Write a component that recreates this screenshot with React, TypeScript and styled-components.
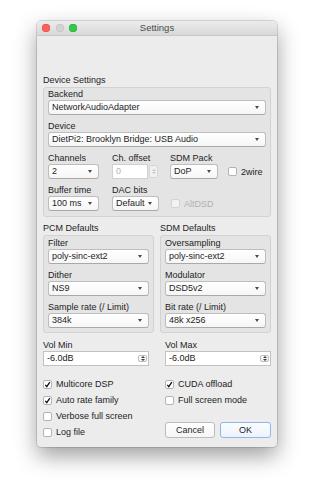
import React from 'react';
import styled, { createGlobalStyle } from 'styled-components';

const GlobalStyle = createGlobalStyle`
    html, body {
        margin: 0;
        padding: 0;
        background: #ffffff;
    }
    body {
        font-family: "Liberation Sans", Arial, sans-serif;
        font-size: 9px;
        color: #232323;
    }
`;

const Page = styled.div`
    width: 314px;
    height: 500px;
    padding: 21px 0 0 37px;
    box-sizing: border-box;
`;

const Window = styled.div`
    width: 240px;
    height: 426px;
    background: #ececec;
    border-radius: 4px;
    overflow: hidden;
    box-shadow: 0 9px 22px rgba(0, 0, 0, 0.38), 0 0 0 0.5px rgba(0, 0, 0, 0.25);
    display: flex;
    flex-direction: column;
`;

const TitleBar = styled.div`
    height: 14px;
    border-bottom: 1px solid #c9c9c9;
    background: linear-gradient(#ececec, #d8d8d8);
    display: flex;
    align-items: center;
    position: relative;
    padding-left: 5px;
`;

const Lights = styled.div`
    display: flex;
    gap: 5.5px;
`;

const Light = styled.span<{ $color: string; $edge: string }>`
    width: 8px;
    height: 8px;
    border-radius: 50%;
    background: ${p => p.$color};
    box-shadow: inset 0 0 0 0.5px ${p => p.$edge};
`;

const Title = styled.div`
    position: absolute;
    left: 0;
    right: 0;
    text-align: center;
    font-size: 9.5px;
    color: #4a4a4a;
    line-height: 14px;
`;

const Body = styled.div`
    padding: 39px 6px 7px 6px;
    display: flex;
    flex-direction: column;
`;

const SectionLabel = styled.div`
    line-height: 10px;
    height: 10px;
    margin-bottom: 2px;
    white-space: nowrap;
`;

const GroupBox = styled.div<{ $pt: number; $pb: number }>`
    border: 1px solid #d2d2d2;
    border-radius: 3px;
    background: #e4e4e4;
    padding: ${p => p.$pt}px 4px ${p => p.$pb}px 4px;
    display: flex;
    flex-direction: column;
    gap: 6px;
`;

const Field = styled.div<{ $w?: number; $ml?: number }>`
    display: flex;
    flex-direction: column;
    gap: 1px;
    width: ${p => (p.$w ? `${p.$w}px` : 'auto')};
    margin-left: ${p => p.$ml ?? 0}px;
    flex-shrink: 0;
`;

const FieldLabel = styled.div`
    line-height: 10px;
    height: 10px;
    white-space: nowrap;
`;

const Combo = styled.div`
    height: 15px;
    box-sizing: border-box;
    border: 1px solid #bdbdbd;
    border-bottom-color: #a9a9a9;
    border-radius: 3px;
    background: linear-gradient(#ffffff, #f6f6f6);
    display: flex;
    align-items: center;
    padding: 0 5px 0 3px;
    white-space: nowrap;
    overflow: hidden;
`;

const ComboText = styled.span`
    flex: 1;
    line-height: 13px;
`;

const Arrow = styled.span`
    width: 0;
    height: 0;
    border-left: 2.5px solid transparent;
    border-right: 2.5px solid transparent;
    border-top: 3px solid #4a4a4a;
    margin-right: 1px;
`;

const Spin = styled.div`
    height: 15px;
    display: flex;
    align-items: stretch;
    gap: 1px;
`;

const SpinInput = styled.div<{ $disabled?: boolean }>`
    flex: 1;
    box-sizing: border-box;
    background: #ffffff;
    border: 1px solid ${p => (p.$disabled ? '#d0d0d0' : '#c2c2c2')};
    color: ${p => (p.$disabled ? '#b4b4b4' : '#222')};
    padding-left: 3px;
    line-height: 13px;
    display: flex;
    align-items: center;
    justify-content: space-between;
`;

const Stepper = styled.div<{ $disabled?: boolean }>`
    width: 7px;
    display: flex;
    flex-direction: column;
    justify-content: center;
    align-items: center;
    gap: 1.5px;
    border-radius: 2px;
    background: ${p => (p.$disabled ? '#f1f1f1' : 'linear-gradient(#fff, #f0f0f0)')};
    border: 0.5px solid ${p => (p.$disabled ? '#d6d6d6' : '#bdbdbd')};
    margin: 1px 1px 1px 0;
`;

const StepUp = styled.span<{ $c: string }>`
    border-left: 2px solid transparent;
    border-right: 2px solid transparent;
    border-bottom: 2.5px solid ${p => p.$c};
`;

const StepDown = styled.span<{ $c: string }>`
    border-left: 2px solid transparent;
    border-right: 2px solid transparent;
    border-top: 2.5px solid ${p => p.$c};
`;

const Row = styled.div`
    display: flex;
    align-items: flex-end;
`;

const Columns = styled.div<{ $cols: string; $gap: number; $mt: number }>`
    display: grid;
    grid-template-columns: ${p => p.$cols};
    column-gap: ${p => p.$gap}px;
    margin-top: ${p => p.$mt}px;
    align-items: start;
`;

const Col = styled.div`
    display: flex;
    flex-direction: column;
`;

const CheckRow = styled.div<{ $ml?: number; $disabled?: boolean; $h?: number }>`
    height: ${p => p.$h ?? 16}px;
    display: flex;
    align-items: center;
    gap: 4px;
    margin-left: ${p => p.$ml ?? 0}px;
    color: ${p => (p.$disabled ? '#b0b0b0' : '#232323')};
    white-space: nowrap;
`;

const Box = styled.span<{ $disabled?: boolean }>`
    width: 9px;
    height: 9px;
    box-sizing: border-box;
    border: 1px solid ${p => (p.$disabled ? '#d3d3d3' : '#b3b3b3')};
    border-radius: 2px;
    background: ${p => (p.$disabled ? '#f2f2f2' : '#ffffff')};
    display: flex;
    align-items: center;
    justify-content: center;
    flex-shrink: 0;
`;

const Buttons = styled.div`
    display: flex;
    gap: 5px;
    margin-top: 14px;
`;

const Button = styled.div<{ $primary?: boolean }>`
    width: ${p => (p.$primary ? 51 : 50)}px;
    height: 16px;
    box-sizing: border-box;
    border: 1px solid ${p => (p.$primary ? '#8fb6ea' : '#bcbcbc')};
    border-radius: 3px;
    background: ${p => (p.$primary ? 'linear-gradient(#fbfdff, #edf3fb)' : 'linear-gradient(#ffffff, #f5f5f5)')};
    display: flex;
    align-items: center;
    justify-content: center;
    line-height: 14px;
`;

function Check({ checked, disabled }: { checked?: boolean; disabled?: boolean }) {
    return (
        <Box $disabled={disabled}>
            {checked && (
                <svg width="7" height="7" viewBox="0 0 7 7">
                    <path d="M1.3 3.8 L2.8 5.6 L5.8 1.2" fill="none" stroke="#111" strokeWidth="1.3" />
                </svg>
            )}
        </Box>
    );
}

function Select({ label, value, w, ml }: { label: string; value: string; w?: number; ml?: number }) {
    return (
        <Field $w={w} $ml={ml}>
            <FieldLabel>{label}</FieldLabel>
            <Combo>
                <ComboText>{value}</ComboText>
                <Arrow />
            </Combo>
        </Field>
    );
}

function SpinField({ label, value, disabled, w, ml }: { label: string; value: string; disabled?: boolean; w?: number; ml?: number }) {
    const c = disabled ? '#c4c4c4' : '#3c3c3c';
    return (
        <Field $w={w} $ml={ml}>
            <FieldLabel>{label}</FieldLabel>
            {disabled ? (
                <Spin>
                    <SpinInput $disabled>{value}</SpinInput>
                    <Stepper $disabled>
                        <StepUp $c={c} />
                        <StepDown $c={c} />
                    </Stepper>
                </Spin>
            ) : (
                <Spin>
                    <SpinInput>
                        {value}
                        <Stepper>
                            <StepUp $c={c} />
                            <StepDown $c={c} />
                        </Stepper>
                    </SpinInput>
                </Spin>
            )}
        </Field>
    );
}

export default function App() {
    return (
        <Page>
            <GlobalStyle />
            <Window>
                <TitleBar>
                    <Lights>
                        <Light $color="#fc615d" $edge="#de4a46" />
                        <Light $color="#d2d2d2" $edge="#c2c2c2" />
                        <Light $color="#34c84a" $edge="#27aa37" />
                    </Lights>
                    <Title>Settings</Title>
                </TitleBar>
                <Body>
                    <SectionLabel>Device Settings</SectionLabel>
                    <GroupBox $pt={1} $pb={5}>
                        <Select label="Backend" value="NetworkAudioAdapter" />
                        <Select label="Device" value="DietPi2: Brooklyn Bridge: USB Audio" />
                        <Row>
                            <Select label="Channels" value="2" w={51} />
                            <SpinField label="Ch. offset" value="0" disabled w={47} ml={13} />
                            <Select label="SDM Pack" value="DoP" w={48} ml={11} />
                            <CheckRow $ml={10} $h={15}>
                                <Check />
                                2wire
                            </CheckRow>
                        </Row>
                        <Row>
                            <Select label="Buffer time" value="100 ms" w={51} />
                            <Select label="DAC bits" value="Default" w={47} ml={13} />
                            <CheckRow $ml={12} $h={15} $disabled>
                                <Check disabled />
                                AltDSD
                            </CheckRow>
                        </Row>
                    </GroupBox>

                    <Columns $cols="111px 111px" $gap={6} $mt={6}>
                        <Col>
                            <SectionLabel>PCM Defaults</SectionLabel>
                            <GroupBox $pt={2} $pb={4}>
                                <Select label="Filter" value="poly-sinc-ext2" />
                                <Select label="Dither" value="NS9" />
                                <Select label="Sample rate (/ Limit)" value="384k" />
                            </GroupBox>
                        </Col>
                        <Col>
                            <SectionLabel>SDM Defaults</SectionLabel>
                            <GroupBox $pt={2} $pb={4}>
                                <Select label="Oversampling" value="poly-sinc-ext2" />
                                <Select label="Modulator" value="DSD5v2" />
                                <Select label="Bit rate (/ Limit)" value="48k x256" />
                            </GroupBox>
                        </Col>
                    </Columns>

                    <Columns $cols="106px 106px" $gap={16} $mt={7}>
                        <SpinField label="Vol Min" value="-6.0dB" />
                        <SpinField label="Vol Max" value="-6.0dB" />
                    </Columns>

                    <Columns $cols="106px 106px" $gap={16} $mt={10}>
                        <Col>
                            <CheckRow>
                                <Check checked />
                                Multicore DSP
                            </CheckRow>
                            <CheckRow>
                                <Check checked />
                                Auto rate family
                            </CheckRow>
                            <CheckRow>
                                <Check />
                                Verbose full screen
                            </CheckRow>
                            <CheckRow>
                                <Check />
                                Log file
                            </CheckRow>
                        </Col>
                        <Col>
                            <CheckRow>
                                <Check checked />
                                CUDA offload
                            </CheckRow>
                            <CheckRow>
                                <Check />
                                Full screen mode
                            </CheckRow>
                            <Buttons>
                                <Button>Cancel</Button>
                                <Button $primary>OK</Button>
                            </Buttons>
                        </Col>
                    </Columns>
                </Body>
            </Window>
        </Page>
    );
}
